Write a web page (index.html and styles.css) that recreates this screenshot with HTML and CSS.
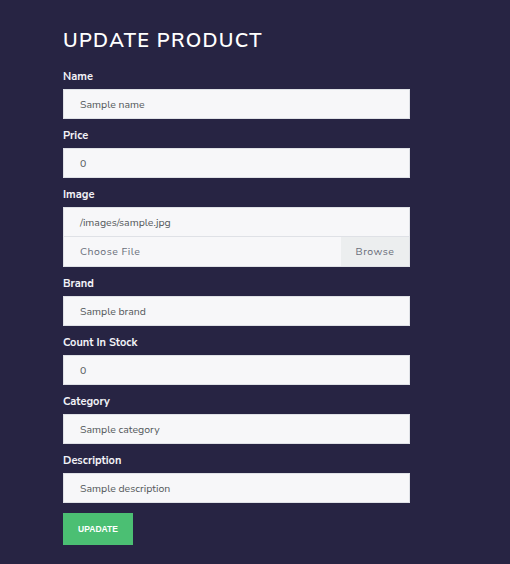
FILE: index.html
```html
<!DOCTYPE html>
<html>
<head>
<meta charset="utf-8">
<link rel="stylesheet" href="styles.css">
</head>
<body>
<main class="page">
  <h1 class="title">Update Product</h1>
  <form class="form">
    <div class="group">
      <label class="label">Name</label>
      <div class="input">Sample name</div>
    </div>
    <div class="group">
      <label class="label">Price</label>
      <div class="input">0</div>
    </div>
    <div class="group">
      <label class="label">Image</label>
      <div class="input">/images/sample.jpg</div>
      <div class="file">
        <span class="file-name">Choose File</span>
        <span class="file-btn">Browse</span>
      </div>
    </div>
    <div class="group">
      <label class="label">Brand</label>
      <div class="input">Sample brand</div>
    </div>
    <div class="group">
      <label class="label">Count In Stock</label>
      <div class="input">0</div>
    </div>
    <div class="group">
      <label class="label">Category</label>
      <div class="input">Sample category</div>
    </div>
    <div class="group">
      <label class="label">Description</label>
      <div class="input">Sample description</div>
    </div>
    <button type="button" class="btn">Upadate</button>
  </form>
</main>
</body>
</html>
```

FILE: styles.css
```css
html, body {
  margin: 0;
  padding: 0;
  background: #272443;
  height: 100%;
}
body {
  font-family: "Nunito Sans", "Lato", "Open Sans", sans-serif;
}
.page {
  padding: 28px 0 0 63px;
  width: 347px;
}
.title {
  margin: 0 0 15px;
  font-size: 20px;
  line-height: 26px;
  font-weight: 600;
  letter-spacing: 1.3px;
  text-transform: uppercase;
  color: #ffffff;
}
.form {
  display: flex;
  flex-direction: column;
}
.group {
  display: flex;
  flex-direction: column;
  margin-bottom: 9px;
}
.label {
  font-size: 11px;
  line-height: 15px;
  font-weight: 700;
  color: #f2f2f7;
  margin-bottom: 5px;
}
.input {
  box-sizing: border-box;
  height: 30px;
  background: #f7f7f9;
  border: 1px solid #dfe1e6;
  padding: 0 16px;
  display: flex;
  align-items: center;
  font-size: 10.5px;
  color: #55595c;
}
.file {
  box-sizing: border-box;
  height: 30px;
  background: #f7f7f9;
  border: 1px solid #dfe1e6;
  border-top: 0;
  display: flex;
  align-items: stretch;
  font-size: 10.5px;
  letter-spacing: 0.5px;
  color: #6a6f7b;
}
.file-name {
  flex: 1;
  display: flex;
  align-items: center;
  padding-left: 16px;
}
.file-btn {
  width: 68px;
  display: flex;
  align-items: center;
  justify-content: center;
  background: #eceeef;
}
.btn {
  align-self: flex-start;
  margin-top: 1px;
  width: 70px;
  height: 32px;
  border: 0;
  background: #4bbf73;
  color: #ffffff;
  font-family: "Liberation Sans", Arial, sans-serif;
  font-size: 8.5px;
  font-weight: 700;
  text-transform: uppercase;
  padding: 0;
}
```
